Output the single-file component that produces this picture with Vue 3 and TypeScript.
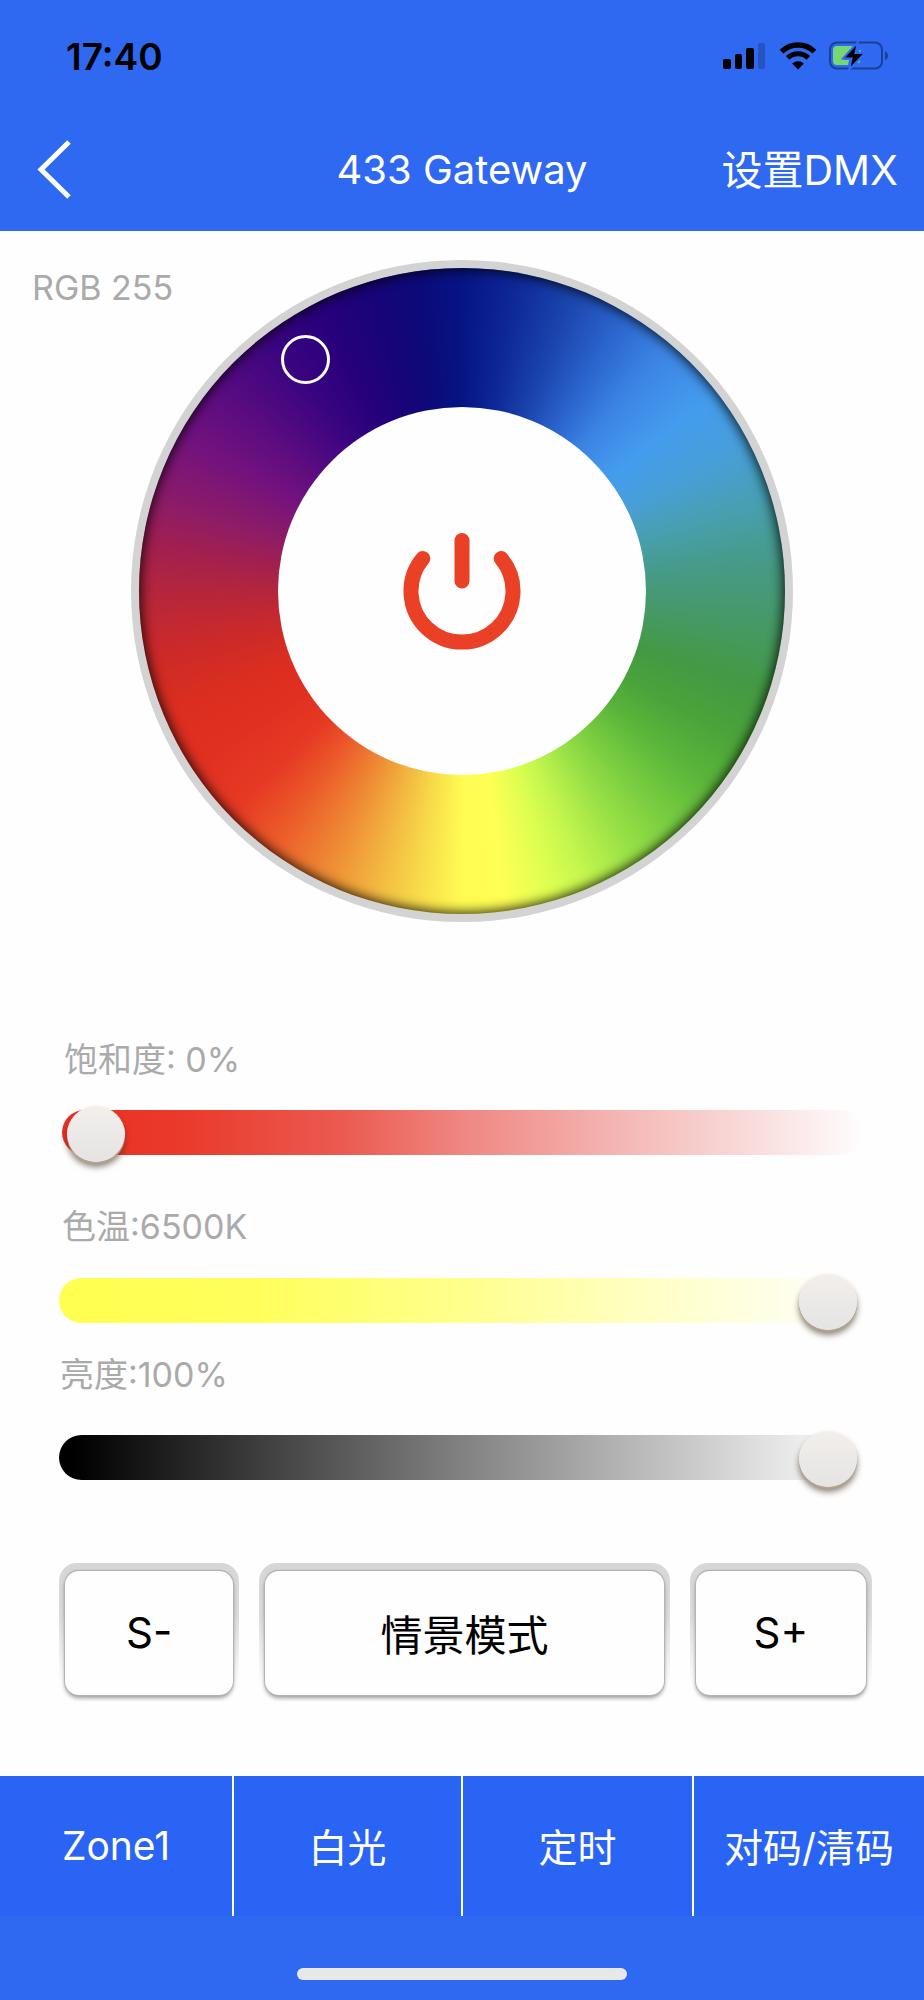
<script setup lang="ts">
import { computed, ref } from 'vue'

const rgb = ref<number>(255)
const saturation = ref<number>(0)
const temperature = ref<number>(6500)
const brightness = ref<number>(100)
const powered = ref<boolean>(true)

interface Tab {
  id: string
  label: string
}

const tabs: Tab[] = [
  { id: 'zone', label: 'Zone1' },
  { id: 'white', label: '白光' },
  { id: 'timer', label: '定时' },
  { id: 'pair', label: '对码/清码' },
]

const saturationText = computed<string>(() => `饱和度: ${saturation.value}%`)
const temperatureText = computed<string>(() => `色温:${temperature.value}K`)
const brightnessText = computed<string>(() => `亮度:${brightness.value}%`)
</script>

<template>
  <div class="screen">
    <header class="top">
      <div class="status">
        <span class="clock">17:40</span>
        <div class="indicators">
          <svg class="signal" width="44" height="28" viewBox="0 0 44 28" aria-hidden="true">
            <rect x="0" y="17" width="8" height="10" rx="2" />
            <rect x="12" y="12" width="7" height="15" rx="2" />
            <rect x="23" y="6" width="8" height="21" rx="2" />
            <rect x="35" y="1" width="7" height="26" rx="2" opacity="0.2" />
          </svg>
          <svg class="wifi" width="38" height="28" viewBox="0 0 38 28" aria-hidden="true">
            <path d="M2.6 9.6A23.5 23.5 0 0 1 35.4 9.6" fill="none" stroke="#000" stroke-width="5.4" />
            <path d="M8.6 15.9A15 15 0 0 1 29.4 15.9" fill="none" stroke="#000" stroke-width="5" />
            <path d="M19 27.4L13.2 21.6A8.6 8.6 0 0 1 24.8 21.6Z" />
          </svg>
          <svg class="battery" width="62" height="30" viewBox="0 0 62 30" aria-hidden="true">
            <rect x="1" y="1.5" width="52" height="26" rx="7" fill="none" stroke="#1d3f92" stroke-width="2" />
            <path d="M56 10.5C60 11.5 60 18 56 19Z" fill="#1d3f92" />
            <path d="M8 5H24L14 19H20L19 24H8Q4 24 4 20V9Q4 5 8 5Z" fill="#77d772" />
            <path d="M30 9L32 9V11L30 12ZM29 20L31 18V22H28Z" fill="#77d772" opacity="0.6" />
            <path d="M29 1L14 17.5H22.5L20 29L36 12H26.5Z" stroke="#2f68f1" stroke-width="2" />
          </svg>
        </div>
      </div>
      <nav class="bar">
        <button class="back" type="button" aria-label="返回">
          <svg width="38" height="60" viewBox="0 0 38 60" aria-hidden="true">
            <path d="M33 2L5 29.5L33 57" fill="none" stroke="#fff" stroke-width="5" />
          </svg>
        </button>
        <h1 class="title">433 Gateway</h1>
        <button class="dmx" type="button">设置DMX</button>
      </nav>
    </header>

    <main class="content">
      <section class="picker">
        <output class="rgb">RGB {{ rgb }}</output>
        <div class="wheel">
          <div class="hues"></div>
          <span class="marker"></span>
          <button class="power" type="button" aria-label="电源" :aria-pressed="powered" @click="powered = !powered">
            <svg width="120" height="120" viewBox="0 0 120 120" aria-hidden="true">
              <g fill="none" stroke="#ea4025" stroke-width="15" stroke-linecap="round">
                <path d="M20.8 27.5A51 51 0 1 0 99.2 27.5" />
                <path d="M60 9.5V50" />
              </g>
            </svg>
          </button>
        </div>
      </section>

      <section class="sliders">
        <div class="field saturation">
          <label for="saturation">{{ saturationText }}</label>
          <div class="track"><input id="saturation" v-model.number="saturation" type="range" min="0" max="100" /></div>
        </div>
        <div class="field temperature">
          <label for="temperature">{{ temperatureText }}</label>
          <div class="track"><input id="temperature" v-model.number="temperature" type="range" min="2700" max="6500" step="100" /></div>
        </div>
        <div class="field brightness">
          <label for="brightness">{{ brightnessText }}</label>
          <div class="track"><input id="brightness" v-model.number="brightness" type="range" min="0" max="100" /></div>
        </div>
      </section>

      <section class="scenes">
        <button class="key" type="button"><span>S-</span></button>
        <button class="key" type="button"><span>情景模式</span></button>
        <button class="key" type="button"><span>S+</span></button>
      </section>
    </main>

    <footer class="bottom">
      <nav class="tabs">
        <button v-for="tab in tabs" :key="tab.id" class="tab" type="button">{{ tab.label }}</button>
      </nav>
      <div class="home"></div>
    </footer>
  </div>
</template>

<style>
body {
  background: #fefefe;
}
</style>

<style scoped>
.screen {
  display: flex;
  flex-direction: column;
  min-height: 100vh;
  background: #fefefe;
  font-family: Inter, "Noto Sans CJK SC", sans-serif;
}
.screen *,
.screen {
  box-sizing: border-box;
}
button {
  margin: 0;
  padding: 0;
  border: 0;
  background: none;
  color: inherit;
  font-family: inherit;
  cursor: pointer;
}
svg {
  display: block;
}

.top {
  height: 231px;
  background: #2f68f1;
  color: #fff;
}
.status {
  display: flex;
  align-items: center;
  justify-content: space-between;
  height: 112px;
  padding: 0 33px 0 66px;
}
.clock {
  color: #000;
  font-size: 37px;
  font-weight: 600;
}
.indicators {
  display: flex;
  align-items: center;
  gap: 12px;
}
.bar {
  display: grid;
  grid-template-columns: 1fr auto 1fr;
  align-items: center;
  height: 116px;
  padding: 0 26px;
}
.back {
  justify-self: start;
  padding-left: 10px;
}
.title {
  margin: 0;
  font-size: 40px;
  font-weight: 400;
  line-height: 60px;
}
.dmx {
  justify-self: end;
  font-size: 41px;
  line-height: 60px;
}

.content {
  flex: 1;
}
.picker {
  position: relative;
  padding-top: 29px;
}
.rgb {
  position: absolute;
  top: 37px;
  left: 32px;
  color: #aaa;
  font-size: 34px;
  line-height: 40px;
}
.wheel {
  position: relative;
  display: grid;
  place-items: center;
  width: 662px;
  height: 662px;
  margin: 0 auto;
  border-radius: 50%;
  background: #d3d3d3;
}
.hues {
  grid-area: 1 / 1;
  width: 646px;
  height: 646px;
  border-radius: 50%;
  background: conic-gradient(
    #061484 0deg, #0e2898 10deg, #1a44ac 20deg, #2a64cc 30deg, #3c84e4 40deg,
    #449cee 52deg, #479fd8 63deg, #489fae 74deg, #469b8c 83deg, #46996f 93deg,
    #449944 108deg, #4aa33a 118deg, #5ab53a 128deg, #78cc40 138deg, #98e046 147deg,
    #c4f64e 157deg, #dcfe50 163deg, #ffff54 172deg, #fffb53 180deg, #f8dc4a 188deg,
    #f2b440 197deg, #ee8a34 206deg, #eb5a29 217deg, #e63a23 226deg, #e03022 237deg,
    #dc2e20 247deg, #cf2b26 256deg, #c42830 263deg, #b3263c 270deg, #a01f52 279deg,
    #8e1c66 286deg, #72127e 299deg, #560b80 311deg, #3a0480 323deg, #28007c 333deg,
    #180478 343deg, #0c0a7a 352deg, #061484 360deg
  );
  box-shadow: inset 0 0 12px 2px rgba(0, 0, 0, 0.8);
}
.marker {
  position: absolute;
  top: 75px;
  left: 150px;
  width: 49px;
  height: 49px;
  border: 3px solid #fff;
  border-radius: 50%;
}
.power {
  grid-area: 1 / 1;
  display: grid;
  place-items: center;
  width: 368px;
  height: 368px;
  border-radius: 50%;
  background: #fefefe;
}

.sliders {
  padding: 118px 67px 0 59px;
}
.field label {
  display: block;
  color: #aaa;
  font-size: 34px;
  line-height: 40px;
}
.track {
  height: 45px;
  border-radius: 23px;
}
.saturation {
  padding-left: 3px;
}
.saturation .track {
  margin-top: 30px;
  margin-right: -7px;
  padding-left: 5px;
  background: linear-gradient(90deg, #e92f20, #ea3a2c 15%, #eb5a50 35%, #ef8782 50%, #f5bcba 72%, #f9dedd 87%, #fefefe);
}
.temperature {
  margin-top: 52px;
}
.temperature .track {
  margin-top: 31px;
  background: linear-gradient(90deg, #ffff50, #ffff5c 25%, #ffff90 52%, #ffffc8 75%, #fefefe);
}
.brightness {
  margin-top: 32px;
}
.brightness .track {
  margin-top: 40px;
  background: linear-gradient(90deg, #000 2%, #808080 50%, #fefefe);
}
.field input {
  display: block;
  width: 100%;
  height: 45px;
  margin: 0;
  background: none;
  appearance: none;
}
.field input::-webkit-slider-runnable-track {
  height: 45px;
}
.field input::-webkit-slider-thumb {
  width: 58px;
  height: 56px;
  margin-top: -4px;
  border-radius: 50%;
  background: linear-gradient(#f3efeb, #e4e4e4);
  box-shadow: 0 2px 1px #b5a48f, 0 5px 6px rgba(60, 45, 30, 0.6);
  appearance: none;
}
.saturation label {
  padding-left: 2px;
}
.temperature label {
  padding-left: 3px;
}
.brightness label {
  padding-left: 1px;
}

.scenes {
  display: grid;
  grid-template-columns: 180fr 410fr 182fr;
  gap: 20px;
  padding: 83px 52px 78px 59px;
}
.key {
  padding: 8px 6px 0;
  border-radius: 18px 18px 12px 12px;
  background: linear-gradient(#d6d6d6, #dcdcdc 40%, #fefefe 92%);
  color: #000;
  font-size: 42px;
}
.key span {
  display: grid;
  place-items: center;
  height: 124px;
  padding-bottom: 2px;
  border-radius: 14px;
  background: #fefefe;
  box-shadow: 0 0 1px 1px #b4b4b4, 0 -1px 1px #9c9c9c, 0 3px 4px rgba(0, 0, 0, 0.4);
}

.bottom {
  height: 224px;
  background: #2f68f1;
}
.tabs {
  display: grid;
  grid-template-columns: 234fr 229fr 231fr 230fr;
  height: 140px;
  background: #2a64f5;
}
.tab {
  padding-bottom: 2px;
  color: #fff;
  font-size: 39px;
}
.tab:not(:last-child) {
  border-right: 2px solid #fff;
}
.home {
  width: 330px;
  height: 12px;
  margin: 52px auto 0;
  border-radius: 6px;
  background: #e8e8e8;
}
</style>
